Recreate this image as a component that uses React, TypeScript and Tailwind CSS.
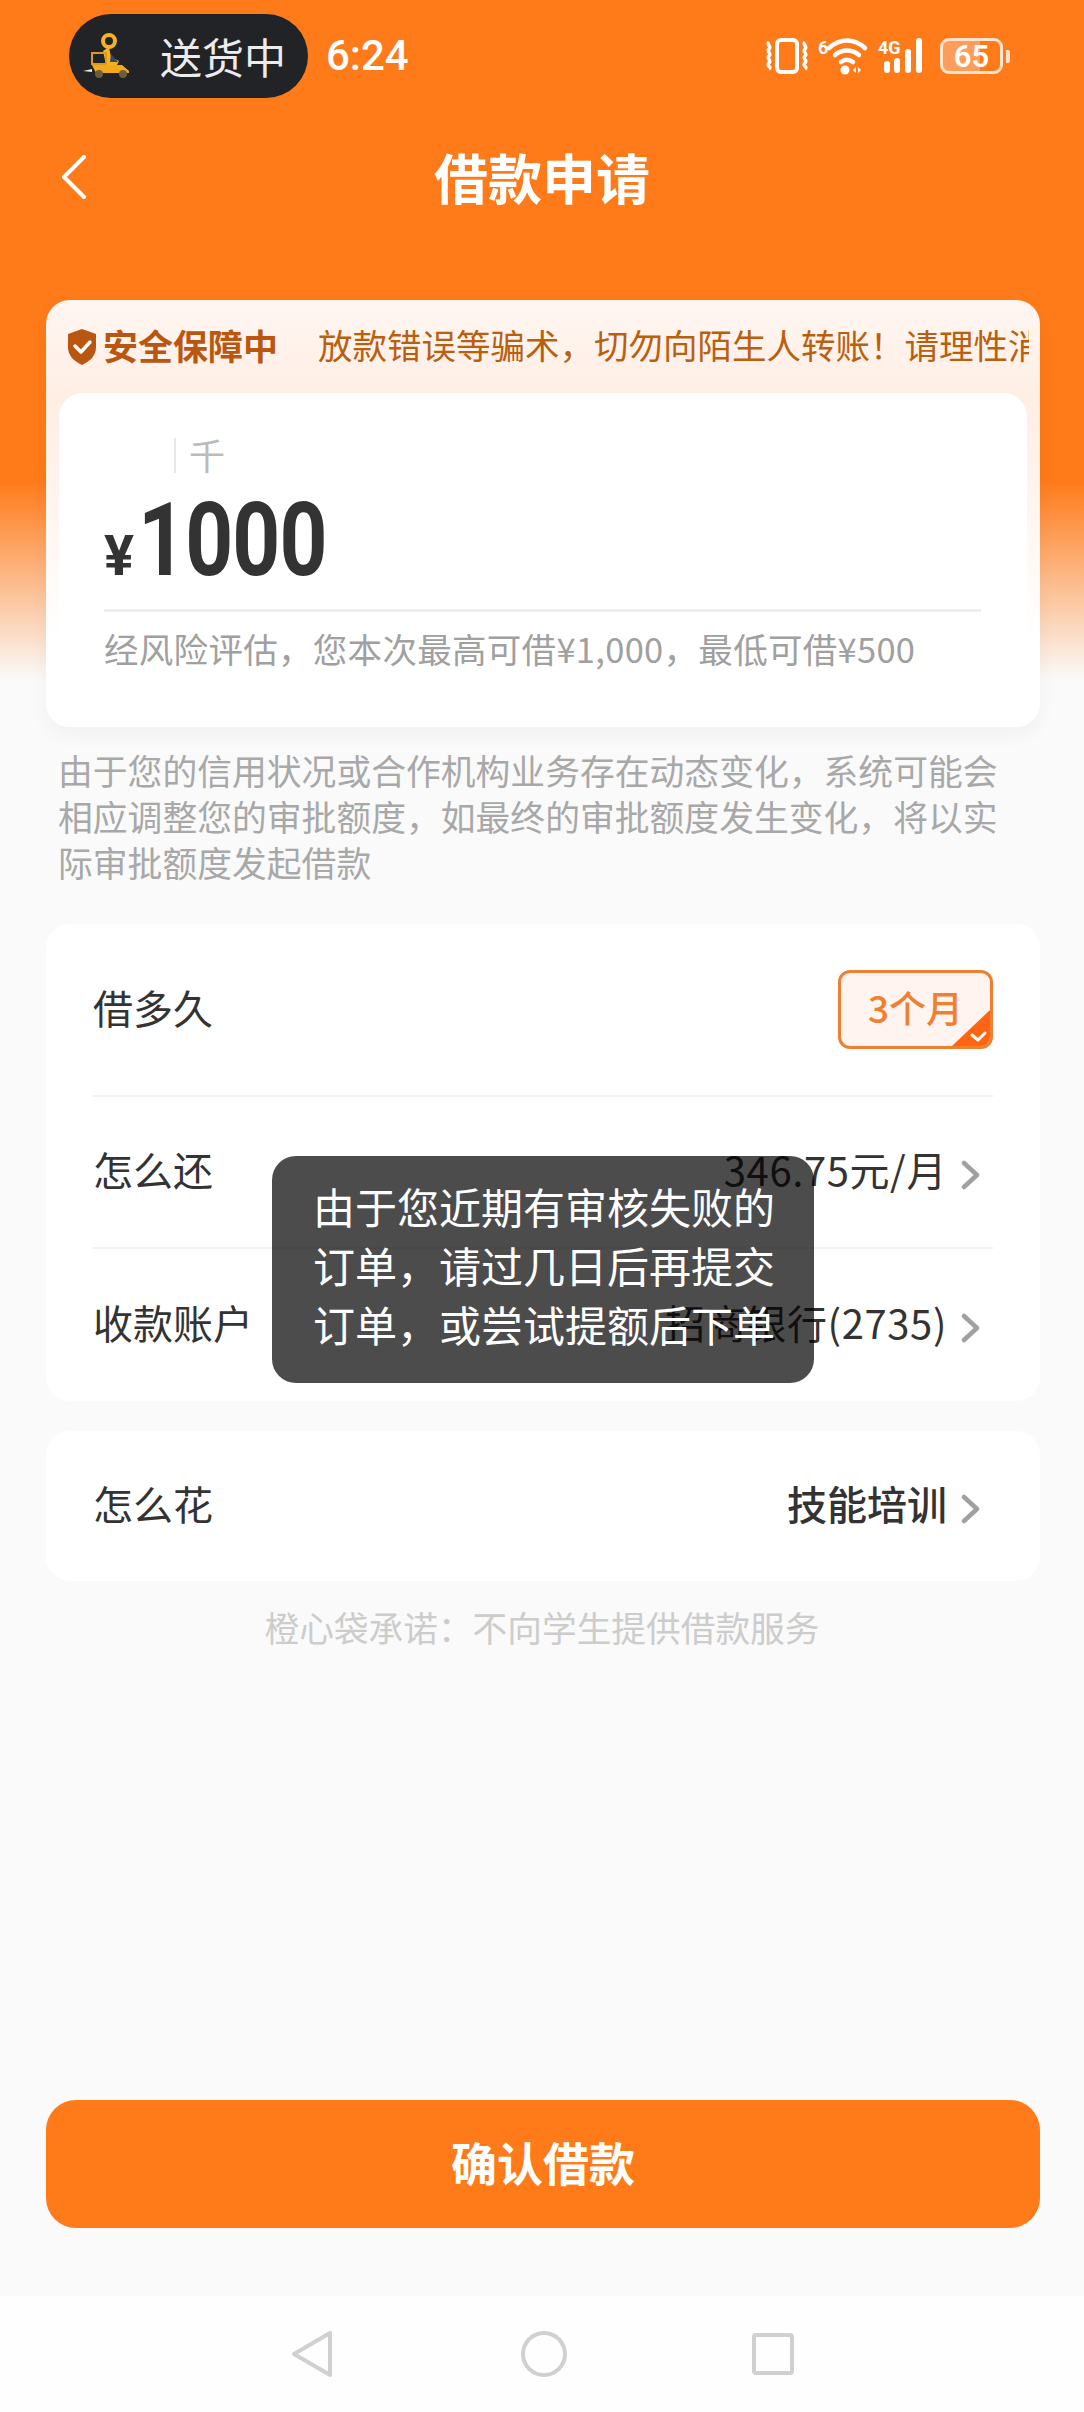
function Chevron() {
  return (
    <svg width="20" height="30" viewBox="0 0 20 30" fill="none" className="ml-[14px] mt-[5px] shrink-0">
      <path d="M3 3l13 12L3 27" stroke="#a0a0a0" strokeWidth="4.5" strokeLinecap="round" strokeLinejoin="round" />
    </svg>
  );
}

function Rider() {
  return (
    <svg width="52" height="48" viewBox="0 0 52 48">
      <circle cx="27" cy="9" r="6" fill="none" stroke="#f5b324" strokeWidth="4" />
      <path d="M27 15l2 10 8 4-2 4H24l-3-14z" fill="#f5b324" />
      <path d="M29 22l7 8h-8z" fill="#2f4a6b" />
      <rect x="10" y="21" width="14" height="11" fill="none" stroke="#d99a1f" strokeWidth="2" />
      <path d="M10 33h30l7 6v2H14z" fill="#f5a918" />
      <circle cx="17" cy="42" r="4" fill="#6b5d3f" />
      <circle cx="41" cy="42" r="4" fill="#6b5d3f" />
      <path d="M1 39l9-2v3z" fill="#e8e8e8" />
    </svg>
  );
}

function StatusIcons() {
  return (
    <div className="flex items-center text-white">
      {/* vibrate */}
      <svg width="44" height="36" viewBox="0 0 44 36" fill="none" stroke="white">
        <rect x="12" y="2" width="20" height="32" rx="4" strokeWidth="4" />
        <path d="M4 4c-3 3 3 4 0 7s3 4 0 7 3 4 0 7 3 4 0 6M40 4c-3 3 3 4 0 7s3 4 0 7 3 4 0 7 3 4 0 6" strokeWidth="3.5" />
      </svg>
      {/* wifi 6 */}
      <svg width="50" height="38" viewBox="0 0 50 38" fill="none" className="ml-[9px] overflow-visible">
        <text x="0" y="17" fontSize="18" fontWeight="700" fill="white" fontFamily="Roboto, sans-serif">6</text>
        <path d="M11 11c11-10 25-10 36 0M17 18c7-6 17-6 24 0M23 25c4-3 8-3 12 0" stroke="white" strokeWidth="4.5" strokeLinecap="round" />
        <circle cx="27" cy="33" r="4.5" fill="white" />
        <path d="M35 33l3-3v6zM40 30l3 3-3 3z" fill="white" />
      </svg>
      {/* signal 4G */}
      <svg width="50" height="38" viewBox="0 0 50 38" className="ml-[10px] overflow-visible">
        <text x="0" y="17" fontSize="18" fontWeight="700" fill="white" fontFamily="Roboto, sans-serif">4G</text>
        <rect x="6" y="24" width="6" height="12" rx="3" fill="white" />
        <rect x="16" y="21" width="6" height="15" rx="3" fill="white" />
        <rect x="27" y="12" width="6" height="24" rx="3" fill="white" />
        <rect x="38" y="1" width="6" height="35" rx="3" fill="white" />
      </svg>
      {/* battery */}
      <div className="ml-[12px] flex items-center">
        <div className="w-[63px] h-[36px] rounded-[9px] border-[3px] border-[#ffe3cc] bg-[linear-gradient(90deg,#ff9d5c_0,#ff9d5c_65%,#ff7a18_65%)] flex items-center justify-center text-[31px] leading-none font-semibold text-white font-['Roboto',sans-serif]">
          65
        </div>
        <div className="w-[4px] h-[13px] rounded-r-[2px] bg-[#ffe3cc] ml-[3px]" />
      </div>
    </div>
  );
}

export default function App() {
  return (
    <div className="relative h-[2412px] w-[1084px] overflow-hidden flex flex-col font-['Noto_Sans_CJK_SC',sans-serif] bg-[linear-gradient(180deg,#ff7a18_0,#ff7a18_480px,#fafafa_680px)]">
      {/* status bar */}
      <div className="flex items-center pt-[14px] pl-[69px] pr-[74px]">
        <div className="w-[239px] h-[84px] rounded-[42px] bg-[#212326] flex items-center pl-[13px]">
          <Rider />
          <span className="ml-[26px] text-[42px] leading-none text-[#ececec]">送货中</span>
        </div>
        <span className="ml-[18px] text-[42px] leading-none text-white font-medium font-['Roboto',sans-serif]">6:24</span>
        <div className="ml-auto"><StatusIcons /></div>
      </div>

      {/* header */}
      <div className="relative flex items-center justify-center mt-[48px] h-[62px]">
        <svg width="26" height="44" viewBox="0 0 26 44" fill="none" className="absolute left-[61px] top-[9px]">
          <path d="M23 2L3 22l20 20" stroke="white" strokeWidth="4" strokeLinecap="round" strokeLinejoin="round" />
        </svg>
        <h1 className="text-[54px] leading-none font-bold text-white">借款申请</h1>
      </div>

      {/* amount card */}
      <div className="ml-[46px] mr-[44px] mt-[92px] h-[427px] rounded-[24px] bg-[linear-gradient(180deg,#fff6f2,#ffeee4_100px,#ffffff_340px)] shadow-[0_8px_20px_rgba(0,0,0,0.04)] flex flex-col overflow-hidden shrink-0">
        <div className="h-[93px] flex items-center pl-[20px] shrink-0 overflow-hidden">
          <svg width="32" height="38" viewBox="0 0 32 38" className="shrink-0">
            <path d="M16 1l14 5v13c0 9-6 14-14 18C8 33 2 28 2 19V6z" fill="#b9560f" />
            <path d="M9 18l6 6 9-10" fill="none" stroke="white" strokeWidth="3.5" strokeLinecap="round" strokeLinejoin="round" />
          </svg>
          <span className="ml-[5px] pb-[5px] text-[35px] leading-none font-bold text-[#b9560f] whitespace-nowrap">安全保障中</span>
          <div className="ml-[40px] w-[711px] overflow-hidden shrink-0 pb-[5px]">
            <span className="block text-[34.5px] leading-none text-[#b9600f] whitespace-nowrap">放款错误等骗术，切勿向陌生人转账！请理性消费</span>
          </div>
        </div>
        <div className="mx-[13px] flex-1 rounded-t-[24px] bg-white pl-[45px] pr-[46px] pt-[44px]">
          <div className="flex items-center h-[36px] pl-[70px]">
            <div className="w-[2px] h-[35px] bg-[#e8e8e8]" />
            <span className="ml-[13px] pb-[2px] text-[36px] leading-none text-[#bbbbbb]">千</span>
          </div>
          <div className="flex items-baseline h-[130px] pt-[24px]">
            <span className="text-[56px] leading-[86px] font-bold text-[#333333] font-['Roboto',sans-serif]">¥</span>
            <span className="ml-[4px] text-[102px] leading-[86px] font-bold text-[#333333] font-['Roboto',sans-serif] tracking-[-1px] origin-left scale-x-[0.82] inline-block">1000</span>
          </div>
          <div className="h-[3px] bg-[#eeeeee] mt-[6px]" />
          <p className="mt-[13px] text-[34.5px] leading-[46px] tracking-[0.3px] text-[#a0a0a0] whitespace-nowrap">经风险评估，您本次最高可借¥1,000，最低可借¥500</p>
        </div>
      </div>

      {/* description */}
      <p className="ml-[58px] mt-[20px] text-[34.8px] leading-[46px] text-[#a8a8a8] w-[962px] shrink-0">
        由于您的信用状况或合作机构业务存在动态变化，系统可能会相应调整您的审批额度，如最终的审批额度发生变化，将以实际审批额度发起借款
      </p>

      {/* loan options */}
      <div className="ml-[46px] mr-[44px] mt-[39px] rounded-[24px] bg-white px-[47px] shrink-0">
        <div className="h-[173px] flex items-center justify-between border-b-2 border-[#f2f2f2]">
          <span className="pb-[6px] text-[40px] leading-none text-[#333333]">借多久</span>
          <div className="relative w-[155px] h-[79px] rounded-[12px] border-[3px] border-[#f08030] bg-[#fff4ef] flex items-center justify-center overflow-hidden">
            <span className="pb-[5px] text-[37px] leading-none font-medium text-[#f08030]">3个月</span>
            <svg width="38" height="36" viewBox="0 0 38 36" className="absolute right-0 bottom-0">
              <path d="M38 0v36H0z" fill="#ff6412" />
              <path d="M20 25l6 5 7-7" fill="none" stroke="white" strokeWidth="3" strokeLinecap="round" strokeLinejoin="round" />
            </svg>
          </div>
        </div>
        <div className="h-[152px] flex items-center justify-between border-b-2 border-[#f2f2f2]">
          <span className="pb-[6px] text-[40px] leading-none text-[#333333]">怎么还</span>
          <div className="flex items-center pr-[12px]">
            <span className="pb-[6px] text-[40px] leading-none tracking-[0.6px] text-[#333333]">346.75元/月</span>
            <Chevron />
          </div>
        </div>
        <div className="h-[152px] flex items-center justify-between">
          <span className="pb-[6px] text-[40px] leading-none text-[#333333]">收款账户</span>
          <div className="flex items-center pr-[12px]">
            <span className="pb-[6px] text-[40px] leading-none tracking-[0.6px] text-[#333333]">招商银行(2735)</span>
            <Chevron />
          </div>
        </div>
      </div>

      {/* purpose */}
      <div className="ml-[46px] mr-[44px] mt-[30px] h-[150px] rounded-[24px] bg-white px-[47px] flex items-center justify-between shrink-0">
        <span className="pb-[6px] text-[40px] leading-none text-[#333333]">怎么花</span>
        <div className="flex items-center pr-[12px]">
          <span className="pb-[6px] text-[40px] leading-none font-medium text-[#333333]">技能培训</span>
          <Chevron />
        </div>
      </div>

      <p className="mt-[28px] text-center text-[34.7px] leading-[36px] text-[#cccccc]">橙心袋承诺：不向学生提供借款服务</p>

      {/* confirm button */}
      <div className="mt-auto ml-[46px] mr-[44px] h-[128px] rounded-[30px] bg-[#ff7a18] flex items-center justify-center shrink-0">
        <span className="pb-[6px] text-[46px] leading-none font-semibold text-white">确认借款</span>
      </div>

      {/* nav bar */}
      <div className="mt-[68px] h-[116px] bg-[#fefefe] flex items-center justify-center gap-[185px] shrink-0">
        <svg width="44" height="50" viewBox="0 0 44 50" fill="none" className="mr-[2px]">
          <path d="M40 4v42L4 25z" stroke="#d0d0d0" strokeWidth="4" strokeLinejoin="round" />
        </svg>
        <svg width="46" height="46" viewBox="0 0 46 46" fill="none">
          <circle cx="23" cy="23" r="21" stroke="#d0d0d0" strokeWidth="4" />
        </svg>
        <svg width="42" height="42" viewBox="0 0 42 42" fill="none">
          <rect x="2" y="2" width="38" height="38" rx="2" stroke="#d0d0d0" strokeWidth="4" />
        </svg>
      </div>

      {/* toast */}
      <div className="absolute left-[272px] top-[1156px] w-[542px] h-[227px] rounded-[24px] bg-black/70 pl-[41px] pt-[20px]">
        <p className="w-[470px] text-[42px] leading-[59px] text-white">由于您近期有审核失败的订单，请过几日后再提交订单，或尝试提额后下单</p>
      </div>
    </div>
  );
}
